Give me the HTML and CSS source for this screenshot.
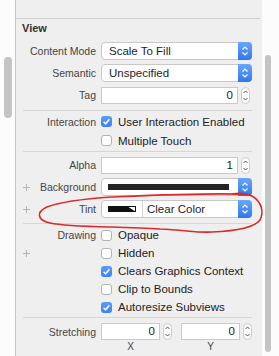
FILE: index.html
```html
<!DOCTYPE html>
<html lang="en">
<head>
  <meta charset="UTF-8">
  <title>View Attributes</title>
  <link rel="stylesheet" href="styles.css">
</head>
<body>
  <div class="window">
    <div class="gutter-left"><div class="thumb thumb-left"></div></div>

    <div class="panel">
      <div class="panel-top"></div>
      <div class="section-title">View</div>

      <div class="group group-modes">
        <div class="row">
          <span></span>
          <span class="label">Content Mode</span>
          <div class="popup">
            <span class="popup-text">Scale To Fill</span>
            <span class="popup-btn"><svg width="8" height="12" viewBox="0 0 8 12"><path d="M1.5 4.5 L4 2 L6.5 4.5 M1.5 7.5 L4 10 L6.5 7.5"/></svg></span>
          </div>
        </div>
        <div class="row">
          <span></span>
          <span class="label">Semantic</span>
          <div class="popup">
            <span class="popup-text">Unspecified</span>
            <span class="popup-btn"><svg width="8" height="12" viewBox="0 0 8 12"><path d="M1.5 4.5 L4 2 L6.5 4.5 M1.5 7.5 L4 10 L6.5 7.5"/></svg></span>
          </div>
        </div>
        <div class="row">
          <span></span>
          <span class="label">Tag</span>
          <div class="numfield">
            <span class="numbox numbox-wide">0</span>
            <span class="stepper"><svg width="9" height="17" viewBox="0 0 9 17"><rect x="0.5" y="0.5" width="8" height="16" rx="4"/><path d="M2.5 6 L4.5 4 L6.5 6 M2.5 11 L4.5 13 L6.5 11"/></svg></span>
          </div>
        </div>
      </div>

      <div class="group group-interaction">
        <div class="row row-check">
          <span></span>
          <span class="label">Interaction</span>
          <label class="check"><span class="box checked"><svg width="11" height="11" viewBox="0 0 11 11"><path d="M2.6 5.8 L4.6 7.8 L8.4 3.2"/></svg></span>User Interaction Enabled</label>
        </div>
        <div class="row row-check">
          <span></span>
          <span class="label"></span>
          <label class="check"><span class="box"></span>Multiple Touch</label>
        </div>
      </div>

      <div class="group group-colors">
        <div class="row">
          <span></span>
          <span class="label">Alpha</span>
          <div class="numfield">
            <span class="numbox numbox-wide">1</span>
            <span class="stepper"><svg width="9" height="17" viewBox="0 0 9 17"><rect x="0.5" y="0.5" width="8" height="16" rx="4"/><path d="M2.5 6 L4.5 4 L6.5 6 M2.5 11 L4.5 13 L6.5 11"/></svg></span>
          </div>
        </div>
        <div class="row">
          <span class="plus"><svg width="7" height="7" viewBox="0 0 7 7"><path d="M3.5 0 V7 M0 3.5 H7"/></svg></span>
          <span class="label">Background</span>
          <div class="popup">
            <span class="well"><span class="well-bar"></span></span>
            <span class="popup-btn"><svg width="8" height="12" viewBox="0 0 8 12"><path d="M1.5 4.5 L4 2 L6.5 4.5 M1.5 7.5 L4 10 L6.5 7.5"/></svg></span>
          </div>
        </div>
        <div class="row">
          <span class="plus"><svg width="7" height="7" viewBox="0 0 7 7"><path d="M3.5 0 V7 M0 3.5 H7"/></svg></span>
          <span class="label">Tint</span>
          <div class="popup">
            <span class="swatch-cell"><svg width="28" height="6" viewBox="0 0 28 6"><rect x="0.5" y="0.5" width="27" height="5" class="sw-frame"/><polygon points="0,0 19,0 19,6 0,6" class="sw-fill"/><polygon points="19,0 28,6 19,6" class="sw-fill"/></svg></span>
            <span class="popup-text tint-text">Clear Color</span>
            <span class="popup-btn"><svg width="8" height="12" viewBox="0 0 8 12"><path d="M1.5 4.5 L4 2 L6.5 4.5 M1.5 7.5 L4 10 L6.5 7.5"/></svg></span>
          </div>
        </div>
      </div>

      <div class="group group-drawing">
        <div class="row">
          <span></span>
          <span class="label">Drawing</span>
          <label class="check"><span class="box"></span>Opaque</label>
        </div>
        <div class="row">
          <span class="plus"><svg width="7" height="7" viewBox="0 0 7 7"><path d="M3.5 0 V7 M0 3.5 H7"/></svg></span>
          <span class="label"></span>
          <label class="check"><span class="box"></span>Hidden</label>
        </div>
        <div class="row">
          <span></span>
          <span class="label"></span>
          <label class="check"><span class="box checked"><svg width="11" height="11" viewBox="0 0 11 11"><path d="M2.6 5.8 L4.6 7.8 L8.4 3.2"/></svg></span>Clears Graphics Context</label>
        </div>
        <div class="row">
          <span></span>
          <span class="label"></span>
          <label class="check"><span class="box"></span>Clip to Bounds</label>
        </div>
        <div class="row">
          <span></span>
          <span class="label"></span>
          <label class="check"><span class="box checked"><svg width="11" height="11" viewBox="0 0 11 11"><path d="M2.6 5.8 L4.6 7.8 L8.4 3.2"/></svg></span>Autoresize Subviews</label>
        </div>
      </div>

      <div class="group group-stretch">
        <div class="row row-stretch">
          <span></span>
          <span class="label">Stretching</span>
          <div class="pair">
            <div class="numfield">
              <span class="numbox">0</span>
              <span class="stepper"><svg width="9" height="17" viewBox="0 0 9 17"><rect x="0.5" y="0.5" width="8" height="16" rx="4"/><path d="M2.5 6 L4.5 4 L6.5 6 M2.5 11 L4.5 13 L6.5 11"/></svg></span>
            </div>
            <div class="numfield">
              <span class="numbox">0</span>
              <span class="stepper"><svg width="9" height="17" viewBox="0 0 9 17"><rect x="0.5" y="0.5" width="8" height="16" rx="4"/><path d="M2.5 6 L4.5 4 L6.5 6 M2.5 11 L4.5 13 L6.5 11"/></svg></span>
            </div>
          </div>
        </div>
        <div class="row row-axis">
          <span></span>
          <span></span>
          <div class="pair">
            <span class="axis">X</span>
            <span class="axis">Y</span>
          </div>
        </div>
      </div>
    </div>

    <div class="gutter-right"><div class="thumb thumb-right"></div></div>
  </div>

  <!-- hand drawn marker around the Tint row -->
  <svg class="annotation" width="279" height="356" viewBox="0 0 279 356">
    <path d="M250 195 C228 192 160 195 112 197 C82 199 60 202 47 207 C36 212 37 220 50 223 C72 228 120 226 160 229 C186 230 196 233 212 232 C236 231 254 228 260 220 C264 212 262 202 252 196 C246 193 238 193 232 194"/>
  </svg>
</body>
</html>
```

FILE: styles.css
```css
body {
  margin: 0;
  background: #fcfcfc;
  font-family: "Liberation Sans", Arial, sans-serif;
  color: #222;
}

.window {
  display: flex;
  height: 356px;
  overflow: hidden;
}

.gutter-left {
  width: 15px;
}

.gutter-right {
  width: 17px;
  padding-left: 3px;
  box-sizing: border-box;
}

.thumb {
  background: #c4c4c4;
}

.thumb-left {
  margin: 57px 0 0 4px;
  width: 8px;
  height: 61px;
  border-radius: 4px;
}

.thumb-right {
  margin-top: 55px;
  width: 6px;
  height: 297px;
  border-radius: 3px;
}

.panel {
  width: 246px;
  border-left: 1px solid #c6c6c6;
  background: #efefef;
}

.panel-top {
  height: 18px;
  margin-right: 2px;
  border-bottom: 1px solid #cfcfcf;
}

.section-title {
  padding-left: 6px;
  font-size: 11px;
  font-weight: bold;
  line-height: 18px;
  color: #333;
}

.group {
  display: flex;
  flex-direction: column;
  margin: 0 10px 0 7px;
  border-bottom: 1px solid #d6d6d6;
}

.group-modes       { padding: 5px 0 6px; gap: 4px; }
.group-interaction { padding: 1px 0 1px; }
.group-colors      { padding: 4px 0 5px; gap: 4px; }
.group-drawing     { padding: 2px 0 1px; }
.group-stretch     { padding: 5px 0 0; border-bottom: none; }

.row {
  display: grid;
  grid-template-columns: 7px 71px 151px;
  align-items: center;
  height: 18px;
}

.row-check { height: 19px; }
.row-stretch { height: 17px; }
.row-axis { height: 12px; margin-top: 1px; }

.label {
  padding-right: 5px;
  text-align: right;
  font-size: 10.5px;
  color: #454545;
  white-space: nowrap;
}

.plus {
  display: flex;
  justify-content: center;
}

.plus svg path {
  stroke: #b4b4b4;
  stroke-width: 1;
  fill: none;
}

/* popup buttons */
.popup {
  display: flex;
  align-items: stretch;
  height: 18px;
  box-sizing: border-box;
  border: 1px solid #c8c8c8;
  border-radius: 4px;
  background: #fff;
}

.popup-text {
  flex: 1;
  padding-left: 7px;
  font-size: 11.5px;
  line-height: 16px;
  color: #1e1e1e;
}

.popup-btn {
  width: 14px;
  margin: -1px -1px -1px 0;
  border-radius: 0 4px 4px 0;
  background: linear-gradient(#69a6fb, #2f77f0);
  display: flex;
  align-items: center;
  justify-content: center;
}

.popup-btn svg path {
  stroke: #fff;
  stroke-width: 1.2;
  fill: none;
}

.well {
  flex: 1;
  display: flex;
  align-items: center;
  padding: 0 9px 0 6px;
}

.well-bar {
  flex: 1;
  height: 6px;
  background: #242424;
}

.swatch-cell {
  width: 40px;
  border-right: 1px solid #cfcfcf;
  display: flex;
  align-items: center;
  justify-content: center;
}

.sw-frame {
  fill: #fff;
  stroke: #111;
  stroke-width: 1;
}

.sw-fill {
  fill: #111;
}

.tint-text {
  padding-left: 4px;
}

/* number fields */
.numfield {
  display: flex;
  align-items: center;
}

.numbox {
  width: 59px;
  height: 17px;
  box-sizing: border-box;
  border: 1px solid #cacaca;
  background: #fff;
  padding-right: 4px;
  text-align: right;
  font-size: 11.5px;
  line-height: 15px;
  color: #222;
}

.numbox-wide {
  width: 137px;
}

.stepper {
  display: flex;
  margin-left: 3px;
}

.stepper rect {
  fill: #fbfbfb;
  stroke: #cdcdcd;
  stroke-width: 1;
}

.stepper path {
  stroke: #555;
  stroke-width: 1;
  fill: none;
}

.pair {
  display: grid;
  grid-template-columns: 71px 71px;
  column-gap: 9px;
}

.axis {
  width: 59px;
  text-align: center;
  font-size: 10px;
  line-height: 12px;
  color: #444;
}

/* checkboxes */
.check {
  display: flex;
  align-items: center;
  font-size: 11.5px;
  color: #222;
  white-space: nowrap;
}

.box {
  width: 11px;
  height: 11px;
  box-sizing: border-box;
  margin-right: 6px;
  border: 1px solid #b3b3b3;
  border-radius: 3px;
  background: #fff;
  display: flex;
}

.box.checked {
  border: none;
  background: linear-gradient(#5b9cf8, #3a82f2);
}

.box svg path {
  stroke: #fff;
  stroke-width: 1.5;
  fill: none;
}

.annotation {
  position: absolute;
  top: 0;
  left: 0;
  pointer-events: none;
}

.annotation path {
  stroke: #d92b2b;
  stroke-width: 1.6;
  fill: none;
  stroke-linecap: round;
}
```
